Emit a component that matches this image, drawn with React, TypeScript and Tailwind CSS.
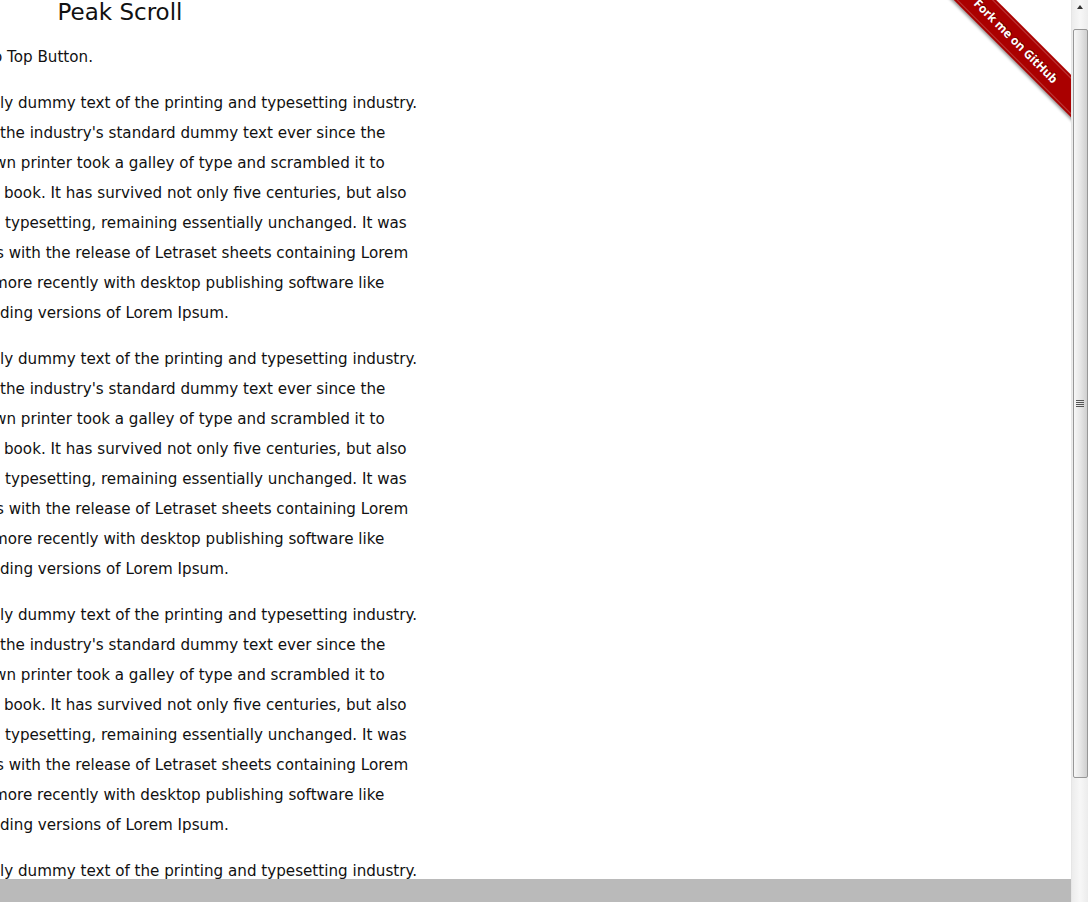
const lorem = [
  { pre: 'Lorem Ipsum is simp', text: 'ly dummy text of the printing and typesetting industry.', shift: 'ml-0' },
  { pre: 'Lorem Ipsum has been ', text: "the industry's standard dummy text ever since the", shift: 'ml-0' },
  { pre: '1500s, when an unkno', text: 'wn printer took a galley of type and scrambled it to', shift: '-ml-[6px]' },
  { pre: 'make a type specimen ', text: 'book. It has survived not only five centuries, but also', shift: 'ml-[4px]' },
  { pre: 'the leap into electronic ', text: 'typesetting, remaining essentially unchanged. It was', shift: 'ml-[5px]' },
  { pre: 'popularised in the 1960', text: 's with the release of Letraset sheets containing Lorem', shift: '-ml-[4px]' },
  { pre: 'Ipsum passages, and ', text: 'more recently with desktop publishing software like', shift: '-ml-[7px]' },
  { pre: 'Aldus PageMaker inclu', text: 'ding versions of Lorem Ipsum.', shift: 'ml-0' },
];

function Line({ pre, text, shift }: { pre: string; text: string; shift: string }) {
  return (
    <div className={`whitespace-nowrap ${shift}`}>
      {/* the start of the line sits left of the viewport */}
      <span className="inline-flex w-0 justify-end whitespace-pre">{pre}</span>
      {text}
    </div>
  );
}

function Ribbon() {
  return (
    <div className="pointer-events-none absolute top-0 right-[17px] h-[149px] w-[149px] overflow-hidden">
      <a
        href="#"
        className="absolute left-[-16px] top-[26px] flex h-[30px] w-[220px] rotate-45 items-center justify-center bg-[#aa0000] font-['Open_Sans',sans-serif] text-[12px] font-bold text-white shadow-[0_2px_3px_rgba(0,0,0,0.4)] [text-shadow:0_-1px_0_rgba(0,0,0,0.5)]"
      >
        <span className="absolute inset-x-0 top-[2px] bottom-[2px] border-y border-[rgba(255,255,255,0.22)]" />
        <span className="relative translate-y-[0.5px]">Fork me on GitHub</span>
      </a>
    </div>
  );
}

function Scrollbar() {
  return (
    <div className="absolute top-0 right-0 flex h-full w-[17px] flex-col items-center border-l border-[#e6e6e6] bg-gradient-to-r from-[#ececec] via-[#f7f7f7] to-[#ececec]">
      <div className="flex h-[13px] items-center justify-center">
        <div className="h-0 w-0 border-x-[3.5px] border-b-[4px] border-x-transparent border-b-[#333]" />
      </div>
      <div className="mt-[16px] flex h-[749px] w-[15px] items-center justify-center rounded-[2px] border border-[#979797] bg-gradient-to-r from-[#f7f7f7] via-[#e6e6e6] to-[#cfcfcf]">
        <div className="flex flex-col gap-[1px]">
          <div className="h-px w-[8px] bg-[#555]" />
          <div className="h-px w-[8px] bg-[#555]" />
          <div className="h-px w-[8px] bg-[#555]" />
          <div className="h-px w-[8px] bg-[#555]" />
        </div>
      </div>
    </div>
  );
}

export default function App() {
  return (
    <div className="relative h-screen overflow-hidden bg-white font-['DejaVu_Sans',sans-serif] text-[15.15px] text-[#111]">
      <main className="w-[1071px]">
        <h1 className="mb-[17px] w-[240px] text-center text-[23px] leading-[25px] font-normal">Peak Scroll</h1>

        <p className="mb-4 leading-[30px]">
          <Line pre="Back t" text="o Top Button." shift="-ml-[7px]" />
        </p>

        {[0, 1, 2, 3].map((i) => (
          <div key={i} className="mb-4 leading-[30px]">
            {lorem.map((l) => (
              <Line key={l.pre} pre={l.pre} text={l.text} shift={l.shift} />
            ))}
          </div>
        ))}
      </main>

      <Ribbon />
      <Scrollbar />

      <div className="absolute bottom-0 left-0 right-[17px] h-[23px] bg-[#bababa]" />
    </div>
  );
}
